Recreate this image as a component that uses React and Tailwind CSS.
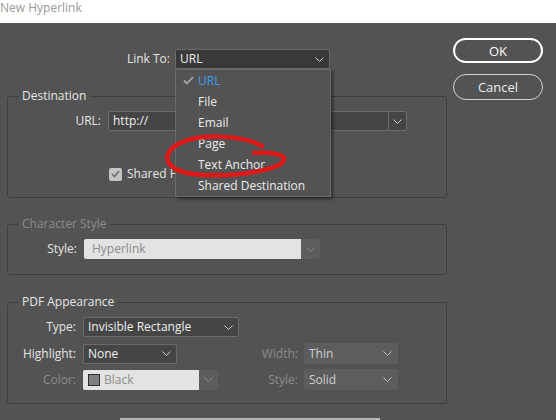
import React from 'react';

const Chevron = ({ color = '#d0d0d0' }) => (
  <svg width="9" height="5" viewBox="0 0 9 5" fill="none">
    <polyline points="0.5,0.5 4.5,4.5 8.5,0.5" stroke={color} strokeWidth="1" />
  </svg>
);

const menuItems = ['URL', 'File', 'Email', 'Page', 'Text Anchor', 'Shared Destination'];

const App = () => {
  return (
    <div className="w-[556px] h-[420px] overflow-hidden font-['Open_Sans',sans-serif] text-[12px] leading-[16px]">
      {/* Title bar */}
      <div className="h-[23px] bg-white text-[#9a9a9a]">New Hyperlink</div>

      <div className="relative h-[395px] bg-[#535353] flex">
        {/* Left column */}
        <div className="w-[447px] pl-[7px]">
          {/* Link To */}
          <div className="flex items-center mt-[26px] h-[20px]">
            <div className="w-[163px] text-right text-[#e6e6e6]">Link To:</div>
            <div className="relative ml-[5px]">
              <div className="w-[155px] h-[20px] bg-[#393939] border border-[#6b6b6b] rounded-[2px] flex items-center justify-between pl-[4px] pr-[5px] text-[#f0f0f0]">
                <span>URL</span>
                <Chevron />
              </div>
              {/* Open menu */}
              <div className="absolute left-0 top-[20px] z-20 w-[156px] bg-[#535353] border border-[#6b6b6b] shadow-[2px_2px_3px_rgba(0,0,0,0.45)]">
                {menuItems.map((item, index) => (
                  <div key={item} className="h-[21px] flex items-center">
                    <div className="w-[22px] flex justify-center pl-[2px]">
                      {index === 0 && (
                        <svg width="11" height="9" viewBox="0 0 11 9" fill="none">
                          <polyline points="1,4.5 4,7.5 10,1" stroke="#a8a8a8" strokeWidth="1.8" />
                        </svg>
                      )}
                    </div>
                    <span className={index === 0 ? 'text-[#3f9cf0]' : 'text-[#ececec]'}>{item}</span>
                  </div>
                ))}
              </div>
            </div>
          </div>

          {/* Destination */}
          <fieldset className="mt-[19px] w-[440px] h-[110px] border border-[#3e3e3e] rounded-[3px]">
            <legend className="ml-[10px] px-[4px] text-[#e6e6e6]">Destination</legend>
            <div className="flex items-center mt-[7px]">
              <div className="w-[93px] text-right text-[#e6e6e6]">URL:</div>
              <div className="ml-[7px] w-[299px] h-[20px] bg-[#454545] border border-[#6b6b6b] rounded-[2px] flex">
                <div className="flex-1 pl-[4px] flex items-center text-[#f0f0f0]">http://</div>
                <div className="w-[18px] border-l border-[#6b6b6b] flex items-center justify-center">
                  <Chevron />
                </div>
              </div>
            </div>
            <div className="flex items-center mt-[35px] ml-[101px]">
              <div className="w-[13px] h-[13px] bg-[#c4c4c4] rounded-[2px] flex items-center justify-center">
                <svg width="9" height="8" viewBox="0 0 9 8" fill="none">
                  <polyline points="1,4 3.5,6.5 8,1" stroke="#6a6a6a" strokeWidth="1.6" />
                </svg>
              </div>
              <span className="ml-[5px] text-[#e6e6e6] whitespace-nowrap">Shared Hyperlink Destination</span>
            </div>
          </fieldset>

          {/* Character Style */}
          <fieldset className="mt-[18px] w-[440px] h-[59px] border border-[#3e3e3e] rounded-[3px]">
            <legend className="ml-[10px] px-[4px] text-[#8c8c8c]">Character Style</legend>
            <div className="flex items-center mt-[7px]">
              <div className="w-[69px] text-right text-[#e6e6e6]">Style:</div>
              <div className="ml-[7px] w-[236px] h-[20px] flex rounded-[2px] overflow-hidden">
                <div className="w-[217px] bg-[#e3e3e3] pl-[8px] flex items-center text-[#8c8c8c]">Hyperlink</div>
                <div className="flex-1 bg-[#5d5d5d] flex items-center justify-center">
                  <Chevron color="#8c8c8c" />
                </div>
              </div>
            </div>
          </fieldset>

          {/* PDF Appearance */}
          <fieldset className="mt-[19px] w-[440px] h-[110px] border border-[#3e3e3e] rounded-[3px]">
            <legend className="ml-[10px] px-[4px] text-[#e6e6e6]">PDF Appearance</legend>
            <div className="flex items-center mt-[7px]">
              <div className="w-[68px] text-right text-[#e6e6e6]">Type:</div>
              <div className="ml-[7px] w-[156px] h-[20px] bg-[#454545] border border-[#6b6b6b] rounded-[2px] flex items-center justify-between pl-[4px] pr-[5px] text-[#f0f0f0]">
                <span>Invisible Rectangle</span>
                <Chevron />
              </div>
            </div>
            <div className="flex items-center mt-[6px]">
              <div className="w-[68px] text-right text-[#e6e6e6]">Highlight:</div>
              <div className="ml-[7px] w-[94px] h-[20px] bg-[#454545] border border-[#6b6b6b] rounded-[2px] flex items-center justify-between pl-[4px] pr-[5px] text-[#f0f0f0]">
                <span>None</span>
                <Chevron />
              </div>
              <div className="w-[121px] text-right text-[#8c8c8c]">Width:</div>
              <div className="ml-[6px] w-[94px] h-[21px] bg-[#5d5d5d] rounded-[2px] flex items-center justify-between pl-[5px] pr-[6px] text-[#cfcfcf]">
                <span>Thin</span>
                <Chevron color="#bdbdbd" />
              </div>
            </div>
            <div className="flex items-center mt-[5px]">
              <div className="w-[68px] text-right text-[#8c8c8c]">Color:</div>
              <div className="ml-[7px] w-[135px] h-[20px] flex rounded-[2px] overflow-hidden">
                <div className="w-[116px] bg-[#e3e3e3] pl-[5px] flex items-center text-[#8c8c8c]">
                  <div className="w-[12px] h-[12px] bg-[#808080] border border-[#2e2e2e] mr-[4px]" />
                  <span>Black</span>
                </div>
                <div className="flex-1 bg-[#5d5d5d] flex items-center justify-center">
                  <Chevron color="#8c8c8c" />
                </div>
              </div>
              <div className="w-[80px] text-right text-[#8c8c8c]">Style:</div>
              <div className="ml-[6px] w-[94px] h-[21px] bg-[#5d5d5d] rounded-[2px] flex items-center justify-between pl-[5px] pr-[6px] text-[#cfcfcf]">
                <span>Solid</span>
                <Chevron color="#bdbdbd" />
              </div>
            </div>
          </fieldset>
        </div>

        {/* Buttons */}
        <div className="ml-[6px] pt-[15px] flex flex-col">
          <button className="w-[90px] h-[25px] rounded-full border-2 border-white text-white text-[13px]">OK</button>
          <button className="mt-[11px] w-[90px] h-[26px] rounded-full border border-[#d4d4d4] text-[#ececec] text-[13px]">Cancel</button>
        </div>

        {/* Red hand-drawn annotation */}
        <svg className="absolute left-0 top-0 z-30 pointer-events-none" width="556" height="395" viewBox="0 23 556 395" fill="none">
          <path
            d="M262 146 C240 134, 195 133, 175 146 C160 157, 166 173, 203 175 C240 177, 281 169, 284 160 C286 154, 270 152, 254 153"
            stroke="#e01818"
            strokeWidth="4.5"
            strokeLinecap="round"
            strokeLinejoin="round"
          />
        </svg>
      </div>
      <div className="h-[2px] bg-[#535353] flex">
        <div className="ml-[120px] w-[260px] bg-[#b8b8b8]" />
      </div>
    </div>
  );
};

export default App;
